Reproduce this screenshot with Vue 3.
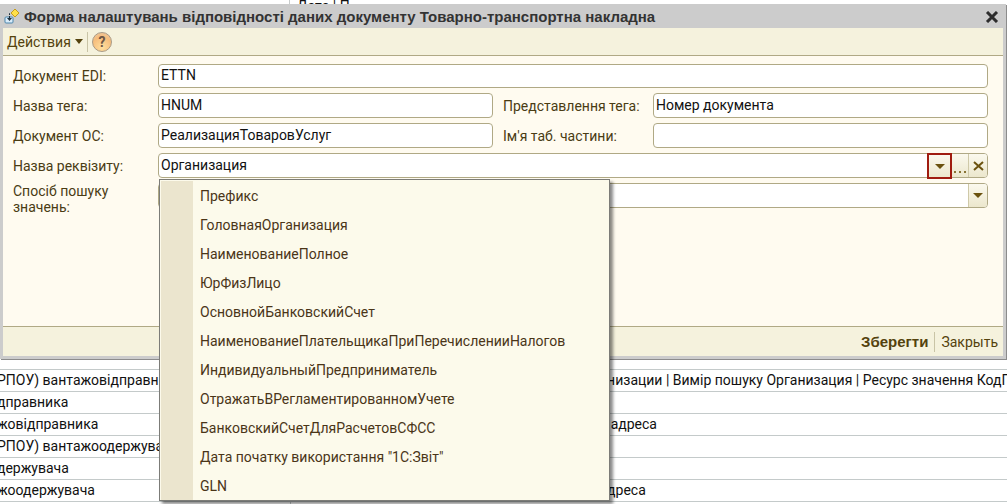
<script setup>
import { ref } from 'vue'

const ediDocument = ref('ETTN')
const tagName = ref('HNUM')
const tagTitle = ref('Номер документа')
const osDocument = ref('РеализацияТоваровУслуг')
const tablePart = ref('')
const attribute = ref('Организация')
const searchMode = ref('')
const menuOpen = ref(true)

const options = [
  'Префикс',
  'ГоловнаяОрганизация',
  'НаименованиеПолное',
  'ЮрФизЛицо',
  'ОсновнойБанковскийСчет',
  'НаименованиеПлательщикаПриПеречисленииНалогов',
  'ИндивидуальныйПредприниматель',
  'ОтражатьВРегламентированномУчете',
  'БанковскийСчетДляРасчетовСФСС',
  'Дата початку використання "1С:Звіт"',
  'GLN',
]

const rows = [
  ['РПОУ) вантажовідправника', 'анизации | Вимір пошуку Организация | Ресурс значення КодП'],
  ['дправника', ''],
  ['жовідправника', 'я адреса'],
  ['РПОУ) вантажоодержувача', ''],
  ['держувача', ''],
  ['жоодержувача', 'адреса'],
]

function choose(option) {
  attribute.value = option
  menuOpen.value = false
}
</script>

<template>
  <main class="page">
    <div class="sliver"><span>Дата | П</span></div>

    <section class="window" aria-labelledby="window-title">
      <header class="titlebar">
        <svg class="app-icon" width="16" height="16" viewBox="0 0 16 16" aria-hidden="true">
          <rect x="1" y="8" width="8" height="6" rx="1" fill="#d9ecfa" stroke="#4d86ad" />
          <path d="M9 4.500H5.500V10" fill="none" stroke="#20303c" stroke-dasharray="2 1" />
          <path d="M3 9h5l-2.500 3z" fill="#20303c" />
          <path d="M11 0l4 4-4 4-4-4z" fill="#ffe04a" stroke="#c59b1c" />
        </svg>
        <h1 id="window-title">Форма налаштувань відповідності даних документу Товарно-транспортна накладна</h1>
        <button class="close" type="button" aria-label="Закрити">
          <svg width="14" height="12" viewBox="0 0 14 12"><path d="M2 1l10 10M12 1L2 11" stroke="#2d2d2d" stroke-width="3" /></svg>
        </button>
      </header>

      <div class="toolbar">
        <button class="flat" type="button">
          Действия
          <svg width="8" height="5" viewBox="0 0 8 5" aria-hidden="true"><path d="M0 0h8L4 5z" fill="#54420d" /></svg>
        </button>
        <span class="divider"></span>
        <button class="help" type="button" aria-label="Довідка">?</button>
      </div>

      <form class="form" @submit.prevent>
        <label for="edi">Документ EDI:</label>
        <div class="field short wide"><input id="edi" v-model="ediDocument" type="text" /></div>

        <label for="tag">Назва тега:</label>
        <div class="field"><input id="tag" v-model="tagName" type="text" /></div>
        <label class="second" for="title">Представлення тега:</label>
        <div class="field"><input id="title" v-model="tagTitle" type="text" /></div>

        <label for="os">Документ ОС:</label>
        <div class="field"><input id="os" v-model="osDocument" type="text" /></div>
        <label class="second" for="part">Ім'я таб. частини:</label>
        <div class="field"><input id="part" v-model="tablePart" type="text" /></div>

        <label for="attr">Назва реквізиту:</label>
        <div class="field wide combo">
          <input id="attr" v-model="attribute" type="text" />
          <button class="cell marked" type="button" aria-label="Список" @click="menuOpen = !menuOpen">
            <svg width="10" height="5" viewBox="0 0 10 5"><path d="M0 0h10L5 5z" fill="#6b520f" /></svg>
          </button>
          <button class="cell dots" type="button" aria-label="Вибрати">
            <svg width="14" height="2" viewBox="0 0 14 2"><path d="M1 0h2v2H1zM6 0h2v2H6zM11 0h2v2h-2z" fill="#8a7434" /></svg>
          </button>
          <button class="cell last" type="button" aria-label="Очистити" @click="attribute = ''">
            <svg width="11" height="10" viewBox="0 0 11 10"><path d="M1 1l9 8M10 1L1 9" stroke="#6b520f" stroke-width="2" /></svg>
          </button>
          <ul v-if="menuOpen" class="menu">
            <li v-for="option in options" :key="option">
              <button type="button" @click="choose(option)">{{ option }}</button>
            </li>
          </ul>
        </div>

        <label class="top" for="mode">Спосіб пошуку значень:</label>
        <div class="field wide top">
          <select id="mode" v-model="searchMode"><option value=""></option></select>
          <span class="cell last" aria-hidden="true">
            <svg width="10" height="5" viewBox="0 0 10 5"><path d="M0 0h10L5 5z" fill="#6b520f" /></svg>
          </span>
        </div>
      </form>

      <footer class="footer">
        <button class="flat save" type="button">Зберегти</button>
        <span class="divider"></span>
        <button class="flat" type="button">Закрыть</button>
      </footer>
    </section>

    <table class="grid">
      <tbody>
        <tr class="blank"><td></td><td></td></tr>
        <tr v-for="(row, i) in rows" :key="i">
          <td>{{ row[0] }}</td>
          <td>{{ row[1] }}</td>
        </tr>
        <tr class="blank"><td></td><td></td></tr>
      </tbody>
    </table>
  </main>
</template>

<style>
body {
  background: #fff;
  overflow: hidden;
}
</style>

<style scoped>
* {
  box-sizing: border-box;
}

.page {
  font-family: Roboto, "Liberation Sans", sans-serif;
  font-size: 14px;
  line-height: 16px;
  color: #111;
  overflow: hidden;
}

button,
input,
select {
  font: inherit;
  color: inherit;
  border: 0;
  padding: 0;
  margin: 0;
  background: none;
}

.sliver {
  height: 4px;
  padding-left: 289px;
  overflow: hidden;
}

.sliver span {
  display: block;
  line-height: 12px;
  padding-left: 7px;
  border-left: 1px solid #c8cccc;
}

.window {
  margin-right: 1px;
  background: #fffbf0;
  border: solid #ccc;
  border-width: 0 3px 3px;
  box-shadow: 1px 1px 0 #8c8c8c;
  color: #4a3c14;
}

.titlebar {
  display: flex;
  align-items: center;
  gap: 4px;
  height: 24px;
  margin: 0 -3px;
  padding: 2px 7px 0 4px;
  background: #ccc;
  color: #333;
}

h1 {
  flex: 1;
  margin: 0;
  font-family: "Liberation Sans", sans-serif;
  font-size: 15px;
  line-height: 16px;
  font-weight: 700;
  white-space: nowrap;
}

.close {
  display: flex;
}

.toolbar {
  display: flex;
  align-items: center;
  gap: 4px;
  height: 28px;
  padding: 0 4px;
  background: #f5f2dd;
  border-bottom: 1px solid #b0a985;
}

.flat {
  display: flex;
  align-items: center;
  gap: 4px;
  color: #54420d;
}

.divider {
  width: 1px;
  height: 20px;
  background: #c9c4a6;
}

.help {
  width: 20px;
  height: 20px;
  border: 1px solid #a89a86;
  border-radius: 50%;
  background: radial-gradient(circle at 50% 80%, #ffdf9e, #f6bd7c 60%, #eec9a4);
  color: #6d5544;
  font-weight: 700;
  line-height: 18px;
}

.form {
  display: grid;
  grid-template-columns: 145px 1fr 160px 1fr;
  align-items: center;
  align-content: start;
  row-gap: 5px;
  min-height: 270px;
  padding: 8px 15px 0 10px;
}

.second {
  padding-left: 10px;
}

.top {
  align-self: start;
}

.field {
  display: flex;
  position: relative;
  height: 25px;
  background: #fff;
  border: 1px solid #b0a985;
  border-radius: 4px;
  color: #111;
}

.short {
  height: 24px;
}

.wide {
  grid-column: span 3;
}

.field input,
.field select {
  flex: 1;
  min-width: 0;
  padding: 0 2px 2px;
  outline: 0;
  appearance: none;
}

.cell {
  display: flex;
  align-items: center;
  justify-content: center;
  width: 19px;
  border-left: 1px solid #cfc9a8;
  background: linear-gradient(#fbf9ee, #ece7cd);
}

.marked {
  width: 25px;
  margin: -1px 0 -2px;
  border: 2px solid #a01c10;
}

.dots {
  width: 16px;
  align-items: flex-end;
  padding-bottom: 4px;
  border-left: 0;
}

.last {
  border-radius: 0 3px 3px 0;
}

.menu {
  position: absolute;
  z-index: 1;
  top: 25px;
  left: 0;
  width: 451px;
  margin: 0;
  padding: 1px 0 0 1px;
  list-style: none;
  border: 1px solid #7c7c78;
  background: #fcfaeb;
  box-shadow: 3px 3px 3px #0007;
  color: #4a3518;
}

.menu li {
  height: 29px;
  border-left: 32px solid #ebe5ce;
}

.menu button {
  width: 100%;
  height: 29px;
  padding-left: 7px;
  text-align: left;
}

.footer {
  display: flex;
  align-items: center;
  justify-content: flex-end;
  gap: 6px;
  height: 30px;
  padding: 0 5px;
  background: #f5f2dd;
  border-top: 1px solid #b0a985;
}

.save {
  font-family: "Liberation Sans", sans-serif;
  font-size: 15px;
  font-weight: 700;
}

.grid {
  width: 100%;
  table-layout: fixed;
  border-collapse: collapse;
}

.grid td {
  height: 22px;
  padding: 0;
  border-bottom: 1px solid #c4caca;
  overflow: hidden;
  white-space: nowrap;
  text-indent: -3px;
}

.grid td:first-child {
  width: 290px;
  border-right: 1px solid #c4caca;
}

.grid td + td {
  padding-left: 312px;
}

.grid .blank td {
  height: 10px;
}
</style>
